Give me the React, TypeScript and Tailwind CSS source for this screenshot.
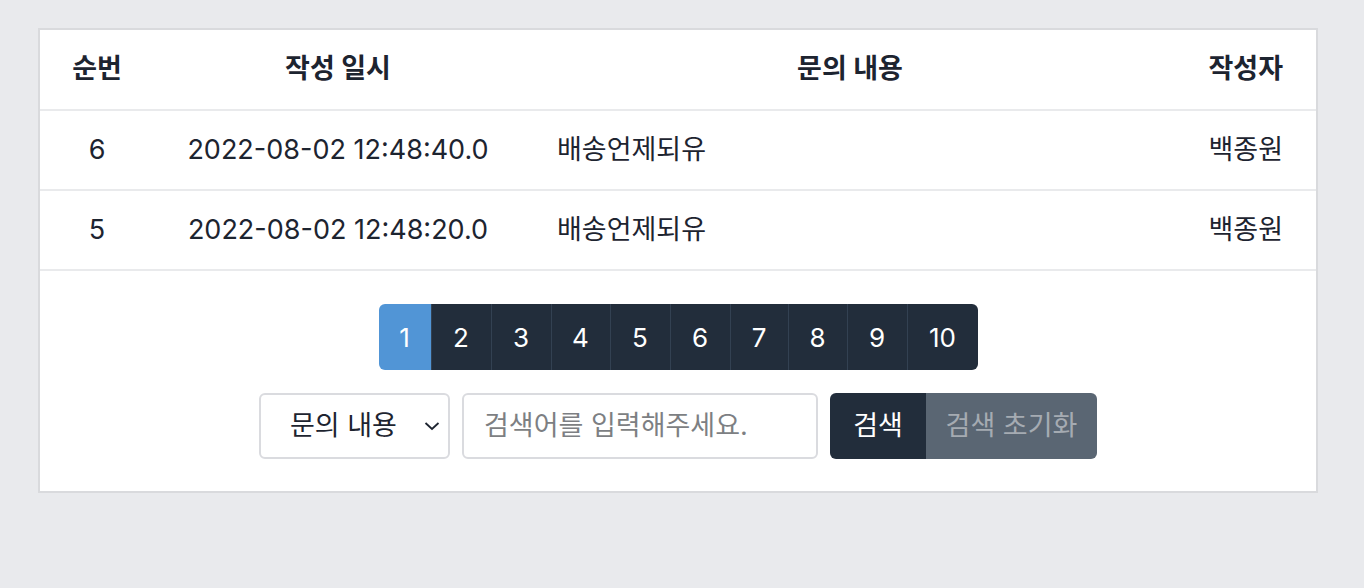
const rows = [
  { id: 6, date: '2022-08-02 12:48:40.0', title: '배송언제되유', writer: '백종원' },
  { id: 5, date: '2022-08-02 12:48:20.0', title: '배송언제되유', writer: '백종원' },
];

// widths read off the screenshot; buttons are not all equal
const pages = [
  { n: 1, w: 'w-[52px]' },
  { n: 2, w: 'w-[60px]' },
  { n: 3, w: 'w-[60px]' },
  { n: 4, w: 'w-[59px]' },
  { n: 5, w: 'w-[60px]' },
  { n: 6, w: 'w-[60px]' },
  { n: 7, w: 'w-[58px]' },
  { n: 8, w: 'w-[59px]' },
  { n: 9, w: 'w-[60px]' },
  { n: 10, w: 'w-[71px]' },
];

const font = { fontFamily: 'Inter, "Noto Sans CJK KR", sans-serif' };

/** Inquiry board: list, pagination and search bar. */
export default function App() {
  return (
    <div className="min-h-[588px] bg-[#e9eaed] pt-[28px] text-[#1d2430]" style={font}>
      <div className="mx-[38px] w-[1280px] border-2 border-[#d9dadd] bg-white">
        <div className="grid grid-cols-[114px_368px_1fr_138px] whitespace-nowrap text-[27px]">
          <div className="flex h-[79px] items-center justify-center font-bold">순번</div>
          <div className="flex h-[79px] items-center justify-center font-bold">작성 일시</div>
          <div className="flex h-[79px] items-center justify-center font-bold">문의 내용</div>
          <div className="flex h-[79px] items-center justify-end pr-[33px] font-bold">작성자</div>
          {rows.map((r) => (
            <div key={r.id} className="contents">
              <div className="flex h-[80px] items-center justify-center border-t-2 border-[#e9eaec]">
                {r.id}
              </div>
              <div className="flex h-[80px] items-center justify-center border-t-2 border-[#e9eaec]">
                {r.date}
              </div>
              <div className="flex h-[80px] items-center border-t-2 border-[#e9eaec] px-[35px]">
                {r.title}
              </div>
              <div className="flex h-[80px] items-center justify-end border-t-2 border-[#e9eaec] pr-[33px]">
                {r.writer}
              </div>
            </div>
          ))}
        </div>

        <div className="flex flex-col items-center gap-[23px] border-t-2 border-[#e9eaec] pb-[32px] pt-[33px]">
          <div className="flex h-[66px] overflow-hidden rounded-[6px] text-[26px] text-white">
            {pages.map((p) => (
              <button
                key={p.n}
                className={`flex items-center justify-center ${p.w} ${
                  p.n === 1 ? 'bg-[#5195d6]' : 'border-l border-[#334152] bg-[#222d3b]'
                }`}
              >
                {p.n}
              </button>
            ))}
          </div>

          <div className="flex h-[66px] items-stretch gap-[12px] text-[27px]">
            <div className="flex w-[191px] items-center justify-between rounded-[6px] border-2 border-[#dadbdf] pl-[29px] pr-[8px]">
              <span>문의 내용</span>
              <svg width="16" height="10" viewBox="0 0 16 10" fill="none" stroke="currentColor" strokeWidth="1.8">
                <polyline points="1.5,2 8,8 14.5,2" />
              </svg>
            </div>
            <div className="flex w-[356px] items-center whitespace-nowrap rounded-[6px] border-2 border-[#dadbdf] px-[20px] text-[#7d7f83]">
              검색어를 입력해주세요.
            </div>
            <div className="flex overflow-hidden rounded-[6px]">
              <button className="flex w-[96px] items-center justify-center bg-[#222d3b] text-white">검색</button>
              <button className="flex w-[171px] items-center justify-center whitespace-nowrap bg-[#5a6673] text-[#a5abb2]">
                검색 초기화
              </button>
            </div>
          </div>
        </div>
      </div>
    </div>
  );
}
